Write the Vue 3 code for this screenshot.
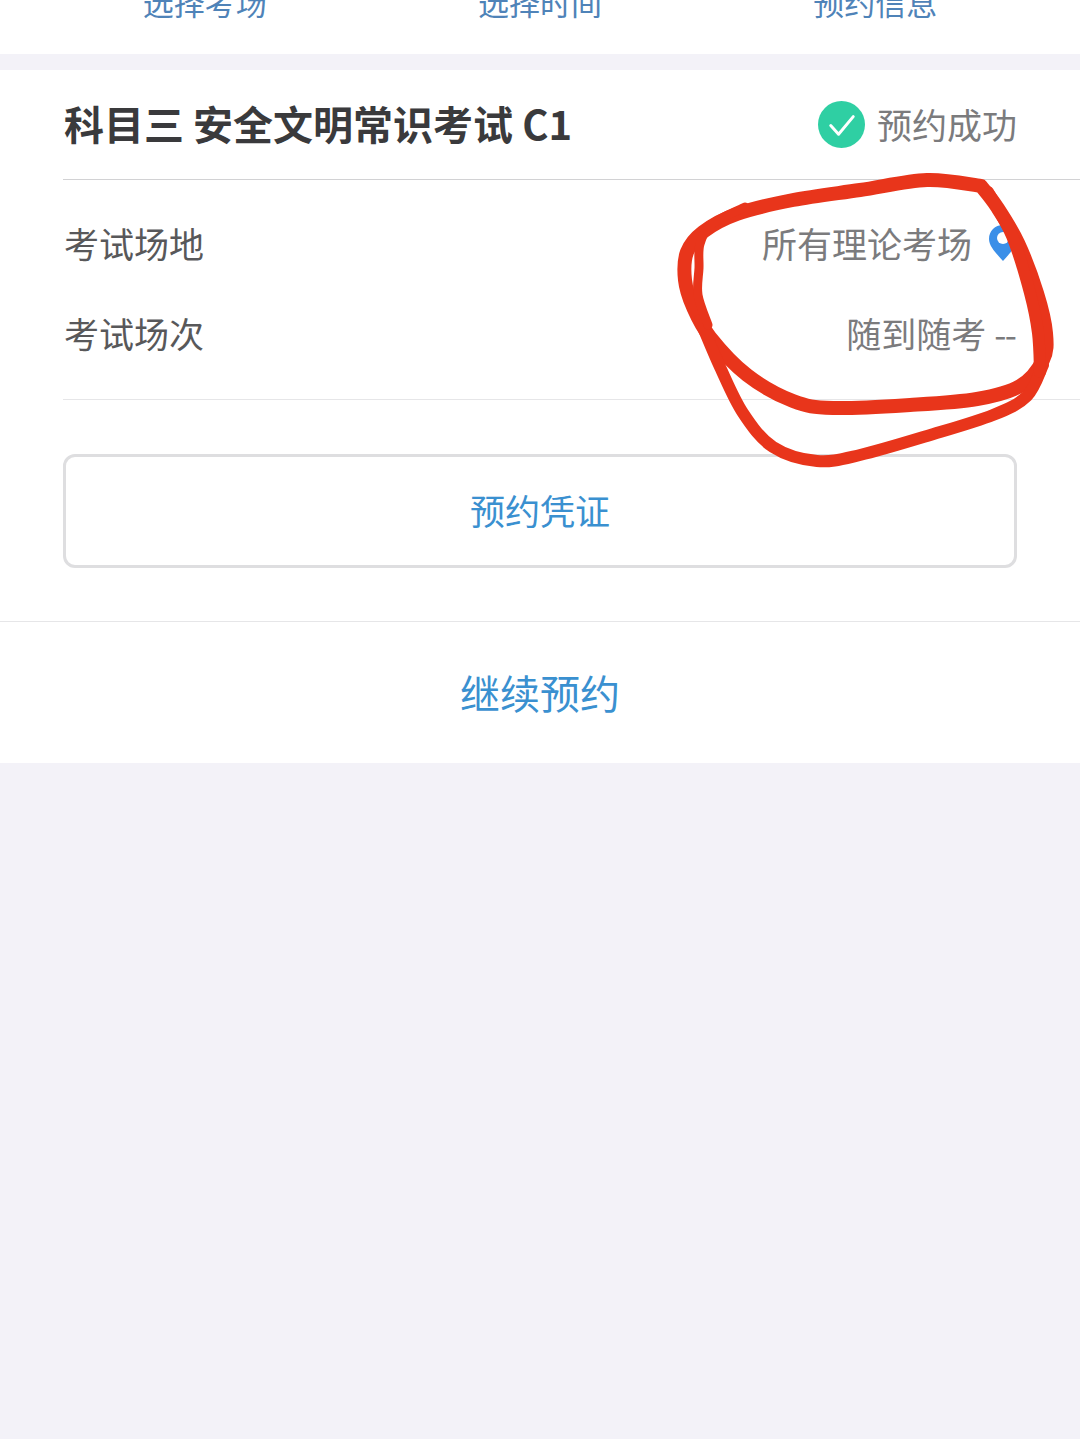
<script setup>
const steps = ["选择考场", "选择时间", "预约信息"];

// 红色手写圈，用点生成平滑曲线
function smooth(pts) {
  let d = `M${pts[0][0]} ${pts[0][1]}`;
  for (let i = 0; i < pts.length - 1; i++) {
    const p0 = pts[i - 1] || pts[i];
    const p1 = pts[i];
    const p2 = pts[i + 1];
    const p3 = pts[i + 2] || p2;
    const c1x = p1[0] + (p2[0] - p0[0]) / 6;
    const c1y = p1[1] + (p2[1] - p0[1]) / 6;
    const c2x = p2[0] - (p3[0] - p1[0]) / 6;
    const c2y = p2[1] - (p3[1] - p1[1]) / 6;
    d += ` C${c1x.toFixed(1)} ${c1y.toFixed(1)} ${c2x.toFixed(1)} ${c2y.toFixed(1)} ${p2[0]} ${p2[1]}`;
  }
  return d;
}

const loopMain = smooth([
  [981, 186], [927, 180], [860, 190], [793, 200], [737, 214], [703, 232], [687, 252],
  [685, 280], [693, 307], [710, 337], [747, 375], [793, 401], [833, 408], [910, 405],
  [977, 399], [1020, 386], [1043, 360], [1046, 333], [1037, 293], [1018, 243], [997, 207], [981, 186],
]);
const loopOuter = smooth([
  [700, 320], [720, 367], [743, 413], [773, 447], [817, 461], [860, 455], [927, 436],
  [993, 415], [1027, 396], [1043, 365],
]);
const loopLeft = smooth([[745, 207], [712, 224], [700, 244], [699, 268], [698, 295], [708, 325]]);
const loopRight = smooth([[988, 192], [1012, 236], [1030, 293], [1038, 333], [1040, 372]]);
</script>

<template>
  <div class="page">
    <div class="steps">
      <span v-for="s in steps" :key="s" class="step">{{ s }}</span>
    </div>

    <div class="card">
      <div class="head">
        <span class="title">科目三 安全文明常识考试 C1</span>
        <span class="status">
          <svg class="check" viewBox="0 0 48 48">
            <circle cx="24" cy="24" r="24" fill="#2fcfa3" />
            <path d="M13 25l8 9 15-18" fill="none" stroke="#fff" stroke-width="3" stroke-linecap="round" stroke-linejoin="round" />
          </svg>
          <span>预约成功</span>
        </span>
      </div>

      <div class="info">
        <div class="row">
          <span class="label">考试场地</span>
          <span class="value">
            <span>所有理论考场</span>
            <svg class="pin" viewBox="0 0 28 36">
              <path d="M14 0C6 0 0 6 0 14c0 8 9 16 14 22 5-6 14-14 14-22C28 6 22 0 14 0z" fill="#3b8fe8" />
              <circle cx="14" cy="13" r="6" fill="#fff" />
            </svg>
          </span>
        </div>
        <div class="row">
          <span class="label">考试场次</span>
          <span class="value">
            <span>随到随考 <span class="dash">--</span></span>
          </span>
        </div>
      </div>

      <div class="btn-wrap">
        <div class="btn">预约凭证</div>
      </div>

      <div class="more">继续预约</div>
    </div>

    <svg class="scribble" viewBox="0 0 1080 1439" fill="none" stroke="#e8351b" stroke-linecap="round" stroke-linejoin="round">
      <path :d="loopMain" stroke-width="14" />
      <path :d="loopOuter" stroke-width="12" />
      <path :d="loopLeft" stroke-width="9" />
      <path :d="loopRight" stroke-width="12" />
    </svg>
  </div>
</template>

<style>
body {
  margin: 0;
}
</style>

<style scoped>
.page {
  position: relative;
  height: 1439px;
  overflow: hidden;
  background: #f3f2f8;
  font-family: "Noto Sans CJK SC", "Liberation Sans", sans-serif;
}

.steps {
  height: 54px;
  padding: 0 37px;
  overflow: hidden;
  background: #fff;
  display: grid;
  grid-template-columns: repeat(3, 1fr);
  box-sizing: border-box;
}
.step {
  margin-top: -17px;
  height: 38px;
  line-height: 38px;
  text-align: center;
  font-size: 31px;
  color: #4f83b8;
}

.card {
  margin-top: 16px;
  background: #fff;
}

.head {
  height: 110px;
  margin-left: 63px;
  padding-right: 63px;
  border-bottom: 1px solid #d2d2d4;
  box-sizing: border-box;
  display: flex;
  align-items: center;
  justify-content: space-between;
}
.title {
  font-size: 40px;
  line-height: 48px;
  margin-top: -3px;
  font-weight: 700;
  color: #3a3a3c;
  margin-left: 1px;
}
.status {
  display: flex;
  align-items: center;
  gap: 12px;
  font-size: 35px;
  line-height: 48px;
  color: #7b7b7d;
}
.status span {
  margin-top: -1px;
}
.check {
  width: 47px;
  height: 47px;
  margin-left: 1px;
}

.info {
  height: 220px;
  margin-left: 63px;
  padding: 22px 63px 0 1px;
  border-bottom: 1px solid #e6e6e8;
  box-sizing: border-box;
}
.row {
  height: 90px;
  padding-bottom: 8px;
  box-sizing: border-box;
  display: flex;
  align-items: center;
  justify-content: space-between;
  font-size: 35px;
  line-height: 48px;
}
.label {
  color: #58585a;
}
.value {
  display: flex;
  align-items: center;
  gap: 17px;
  color: #7b7b7d;
}
.dash {
  letter-spacing: -1.5px;
  margin-right: 1.5px;
}
.pin {
  width: 28px;
  height: 36px;
}

.btn-wrap {
  padding: 54px 63px 53px;
  border-bottom: 1px solid #e6e6e8;
}
.btn {
  height: 108px;
  line-height: 106px;
  border: 3px solid #dedee0;
  border-radius: 12px;
  text-align: center;
  font-size: 35px;
  color: #3a90d0;
}

.more {
  height: 141px;
  line-height: 141px;
  text-align: center;
  font-size: 40px;
  color: #3a90d0;
}

.scribble {
  position: absolute;
  left: 0;
  top: 0;
  width: 1080px;
  height: 1439px;
  pointer-events: none;
}
</style>
